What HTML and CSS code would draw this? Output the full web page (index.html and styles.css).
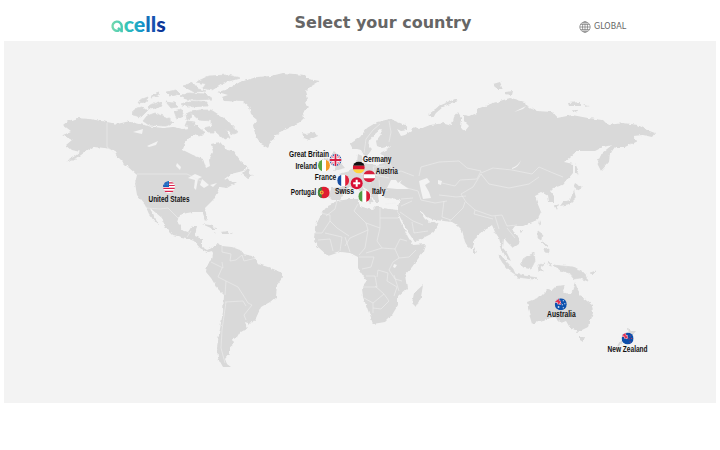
FILE: index.html
```
<!DOCTYPE html>
<html lang="en">
<head>
    <meta charset="utf-8">
    <title>Select your country</title>
    <link rel="stylesheet" href="styles.css">
</head>
<body>
    <div class="header">
        <a class="logo">
            <svg width="60" height="20" viewBox="0 0 60 20" aria-label="Qcells">
                <defs>
                    <linearGradient id="brand" gradientUnits="userSpaceOnUse" x1="0" y1="0" x2="55" y2="0">
                        <stop offset="0" stop-color="#76d9ad"/>
                        <stop offset=".28" stop-color="#36c5b9"/>
                        <stop offset=".55" stop-color="#159bc9"/>
                        <stop offset=".78" stop-color="#164fae"/>
                        <stop offset="1" stop-color="#08298c"/>
                    </linearGradient>
                </defs>
                <path class="logo-q" d="M8 13.4A4.6 4.6 0 1 1 10.7 9.3V15.2M7 10.8L10.4 14"/>
                <text class="logo-text" x="12.7" y="15" textLength="42" lengthAdjust="spacingAndGlyphs">cells</text>
            </svg>
        </a>
        <h1>Select your country</h1>
        <a class="global">
            <svg width="12" height="12" viewBox="0 0 12 12">
                <circle cx="6" cy="6" r="5.2"/>
                <ellipse cx="6" cy="6" rx="2.5" ry="5.2"/>
                <path d="M6 .8V11.2M.8 6H11.2M1.6 3.4H10.4M1.6 8.6H10.4"/>
            </svg>
            <span>GLOBAL</span>
        </a>
    </div>

    <div class="map">
        <svg width="712" height="362" viewBox="4 41 712 362">
            <defs>
                <filter id="coast" filterUnits="userSpaceOnUse" x="4" y="41" width="712" height="362">
                    <feTurbulence type="fractalNoise" baseFrequency=".22" numOctaves="2" seed="4" result="noise"/>
                    <feDisplacementMap in="SourceGraphic" in2="noise" scale="3.5" xChannelSelector="R" yChannelSelector="G"/>
                </filter>
                <clipPath id="round"><circle r="6"/></clipPath>
            </defs>

            <g class="land" filter="url(#coast)">
                <!-- North America -->
                <path d="M63 125L68 121L77 118L90 119L107 122L117 124L128 121.5L140 124L150 126.5L163 128L173 127L182 129L193 127L201 131L195 134L188 139L184 144L183 150L193 155L203 159L206 168L210 166L209 160L213 152L211 144L220 142L227 150L233 151L240 161L247 167L243 171L231 174L223 180L229 178L232 182L237 182L227 188L220 187L217 193L213 200L205 208L207 218L205 220L202 212L193 212L187 213L180 215L178 223L182 230L188 232L192 226L197 226L195 236L202 239L202 247L207 250L212 248L213 251L207 252L200 248L194 241L186 238L173 235L165 227L162 218L150 208L153 216L159 224L156 223L149 214L145 205L137 195L135 183L137 175L128 167L118 157L113 150L105 148L93 147L85 152L77 158L65 162L75 156L80 152L72 150L66 145L72 140L62 135L71 131L63 125Z"/>
                <!-- Arctic islands -->
                <path class="islands" d="M134 109L142 107L147 111L141 117L133 115ZM147 116L155 113L166 117L173 123L166 126L149 125L143 121ZM140 100L148 97L146 102L138 103ZM153 94L159 92L158 95L151 97ZM150 105L160 102L162 106L152 109L147 108ZM166 92L176 90L180 94L170 96ZM166 102L174 103L178 107L171 108ZM174 111L181 109L184 116L177 119ZM186 114L190 112L192 117L187 120ZM181 104L190 101L207 102L207 106L188 107ZM180 96L188 93L205 94L212 99L198 100L186 99ZM183 86L193 83L198 89L206 91L194 92ZM196 82L209 76L228 75L240 78L225 82L212 90L203 88L206 84ZM190 112L200 110L211 110L222 117L231 124L238 132L233 134L226 129L230 138L224 139L216 132L208 132L204 128L212 126L212 121L199 120ZM188 127L196 125L200 129L206 133L199 136L192 132ZM187 121L195 122L193 127L185 126Z"/>
                <!-- Greenland, Iceland, Caribbean -->
                <path d="M218 92L228 89L240 82L257 77L271 76L283 73L305 75L308 79L320 81L310 87L306 91L308 98L305 103L309 107L303 113L304 118L300 122L290 127L278 133L272 140L268 148L261 144L257 138L254 130L253 125L257 120L251 115L249 107L243 102L225 101L222 97L228 95ZM302 133L306 134L315 132L318 136L309 140L304 138Z"/>
                <path d="M242 174L248 168L249 173L253 176L247 178ZM202 224L210 225L218 229L213 229ZM220 232L228 231L229 234L222 234ZM213 232L216 233L214 234ZM230 232L233 233L231 234Z"/>
                <!-- South America -->
                <path d="M211 249L217 244L222 246L232 247L240 250L243 254L253 256L258 264L268 267L281 272L283 277L277 285L276 297L270 302L261 307L256 318L251 324L245 322L247 328L240 332L237 337L233 338L234 344L229 348L229 354L225 359L227 364L231 367L223 367L218 358L217 347L220 328L223 312L224 295L217 288L211 278L206 272L207 265L212 260L213 253Z"/>
                <!-- Eurasia -->
                <path d="M353 149L350 144L360 137L367 128L377 122L390 119L405 125L408 130L401 131L397 129L401 136L405 135L411 131L415 127L420 129L430 125L445 123L452 125L454 117L458 112L461 117L460 128L465 131L469 126L464 121L464 115L470 116L477 113L477 109L493 103L510 98L525 102L527 107L537 111L552 112L557 118L572 115L588 118L603 120L608 125L623 123L638 125L647 130L655 133L652 137L643 135L633 136L637 141L625 147L615 147L610 154L609 162L601 171L597 163L602 153L612 145L603 147L595 151L577 151L564 162L573 164L573 173L563 185L553 188L550 191L554 196L554 202L549 202L548 195L543 192L535 196L537 202L541 212L537 220L523 226L515 226L512 230L520 238L519 244L513 248L507 242L504 238L503 248L507 253L511 261L507 259L502 250L499 238L495 232L492 225L485 230L475 238L473 247L470 250L465 242L462 230L457 225L452 222L435 220L428 218L423 212L419 211L425 219L430 223L433 221L439 225L433 233L415 242L408 232L400 217L397 210L399 203L400 199L385 198L382 194L387 190L382 190L378 195L379 202L375 202L371 195L366 188L362 186L370 195L373 201L370 203L365 197L358 189L349 188L344 194L340 200L332 200L329 197L331 188L343 187L344 179L339 174L350 171L357 162L358 154L362 156L362 163L376 165L384 163L384 157L380 153L388 149L391 146L382 148L377 146L376 141L382 133L381 129L375 134L370 140L369 146L372 149L368 155L365 157L361 150L357 149Z"/>
                <path d="M330 159L334 151L338 155L340 162L345 168L333 171L337 165ZM320 161L328 158L330 166L321 169ZM428 115L439 106L455 99L457 101L443 107L436 113L433 118ZM493 84L500 82L503 89L496 89ZM505 92L513 91L512 95L505 94ZM568 103L580 102L580 106L569 106ZM583 105L590 106L586 107ZM572 110L578 111L574 113Z"/>
                <path d="M575 163L578 170L577 176L575 172ZM576 183L582 187L577 190L574 188ZM574 190L576 198L570 204L560 206L563 202L570 200ZM555 206L559 204L557 210ZM540 220L541 223L539 226ZM474 247L477 252L474 254ZM520 230L523 230L521 233Z"/>
                <!-- Africa -->
                <path d="M328 205L337 201L350 199L358 199L360 206L372 210L376 206L383 208L397 210L400 220L408 237L413 245L425 244L423 252L412 267L405 275L407 288L398 296L398 305L392 315L385 322L373 324L369 313L363 297L362 290L366 280L358 268L358 257L350 253L340 252L328 256L318 247L314 240L315 227L322 213ZM423 285L421 297L416 307L412 303L414 293Z"/>
                <!-- South East Asia and Oceania -->
                <path class="islands" d="M498 255L503 258L513 269L515 274L509 270L503 263ZM515 274L525 276L538 278L533 279L517 277ZM521 261L530 255L534 253L535 261L531 269L523 267ZM538 265L545 263L540 267L544 271L541 270L539 272ZM538 231L542 234L541 240L538 238ZM544 249L549 248L549 253L545 252ZM542 242L547 244L546 246ZM554 265L562 266L574 267L584 273L588 281L580 278L574 279L569 273L560 270ZM590 273L596 271L592 275ZM550 262L551 266L549 265Z"/>
                <path d="M527 302L540 297L548 289L552 290L556 286L565 285L563 291L571 294L575 282L578 290L582 297L592 305L593 313L588 327L578 332L570 328L566 321L561 323L555 317L543 320L532 324L530 317ZM580 337L585 337L583 342L580 340ZM628 327L632 331L636 331L631 337L627 340L616 348L620 341L629 336Z"/>
            </g>

            <g class="water">
                <path d="M133 132L143 129L142 134ZM147 146L158 141L156 145L149 147ZM177 163L181 167L180 170L176 166ZM188 178L195 174L202 177L198 179L196 190L194 188L195 180ZM202 179L209 185L204 188L200 185ZM210 185L217 183L213 187Z"/>
                <path d="M387 188L391 180L396 180L398 183L402 180L400 183L409 189L397 189ZM419 181L427 178L430 182L425 185L429 192L431 198L423 199L421 191ZM438 180L442 181L441 185L438 184ZM394 264L397 265L395 268L393 267ZM512 168Q519 165 521 160Q519 167 512 169ZM514 112L526 106L523 109Z"/>
            </g>

            <g class="borders">
                <path d="M107 123V147M107 147L116 154M137 174H187L201 181M147 208L160 209L168 208L178 218M187 237L191 231"/>
                <path d="M211 262L223 268L222 262M222 268L218 277L226 281L225 295M226 281L238 287L245 298L248 303L252 305L244 315L246 320M225 302L243 301L246 306M226 302L222 330L221 348L225 363M222 246L222 252L231 254L230 261L236 260L242 255L244 261L256 258"/>
                <path d="M320 213L330 215V221L337 228L349 236M330 221L322 233H315M337 201L335 209L326 216M358 204L354 211L366 223L368 230L350 238L345 246M366 223L380 228V208M380 218H398M380 228L377 241L382 248L366 253M368 230L365 248L359 255M382 248L395 249L400 239L407 241M395 249L399 258L409 257L416 250M399 258L393 262L389 270L395 279L402 281M359 257L374 257L371 267L362 269M366 276H375L377 287L364 287M377 277L378 270L388 273L387 281L397 287L394 296M375 286L384 294L373 303V313M373 303L364 298M384 294L389 301L381 309L373 308M394 275L399 291M318 240L330 239L333 251M325 233L342 237L340 251M345 237L350 252M400 212L413 221L423 225M401 206L412 201M412 222L414 233L428 231"/>
                <path d="M364 153L366 139L373 130L380 124M389 121L391 132L389 142M384 158L390 163L394 174M385 166L373 167L375 175L389 178M361 174L371 176L370 184M379 180L380 190M389 174L401 171L414 176M407 188L418 191L421 200L435 203L447 201M419 176L421 167L439 162L459 161L467 168L481 171L477 179L460 180L455 186L442 183M481 173L493 168L512 170L532 174L539 167L553 173L563 177M481 174L489 184L509 188L529 184L539 177M481 174L473 187L461 194L466 202L475 210L492 216L502 215L507 226L517 225M439 195L448 196L456 197L466 196M444 201L442 217L451 220L463 208L465 202M475 210L474 214L493 219M495 216L499 229M507 228L515 238M385 204L396 203M401 199L413 198"/>
            </g>

            <g class="pin" transform="translate(169 187)">
                <g clip-path="url(#round)">
                    <path fill="#fff" d="M-6-6H6V6H-6Z"/>
                    <path stroke="#d8234c" stroke-width="1.2" d="M-6-4.2H6M-6-1.5H6M-6 1.4H6M-6 4.3H6"/>
                    <path fill="#1463bd" d="M-6-6H0V0H-6Z"/>
                    <path stroke="#a9c9ea" stroke-width=".6" stroke-dasharray=".7 1" d="M-5-4H0M-5-2.2H0"/>
                </g>
                <text x="-20.5" y="15.2" textLength="41" lengthAdjust="spacingAndGlyphs">United States</text>
            </g>
            <g class="pin" transform="translate(335.5 160)">
                <g clip-path="url(#round)">
                    <path fill="#17479d" d="M-6-6H6V6H-6Z"/>
                    <path stroke="#fff" stroke-width="2.4" d="M-6-6L6 6M6-6L-6 6"/>
                    <path stroke="#dc2948" stroke-width=".9" d="M-6-6L6 6M6-6L-6 6"/>
                    <path stroke="#fff" stroke-width="3.4" d="M0-6V6M-6 0H6"/>
                    <path stroke="#d61f43" stroke-width="1.8" d="M0-6V6M-6 0H6"/>
                </g>
                <text x="-46.5" y="-3.5" textLength="40" lengthAdjust="spacingAndGlyphs">Great Britain</text>
            </g>
            <g class="pin" transform="translate(324 165.5)">
                <g clip-path="url(#round)">
                    <path fill="#fff" d="M-6-6H6V6H-6Z"/>
                    <path fill="#5aa544" d="M-6-6H-2V6H-6Z"/>
                    <path fill="#f59a28" d="M2-6H6V6H2Z"/>
                </g>
                <text x="-28.5" y="3" textLength="21.5" lengthAdjust="spacingAndGlyphs">Ireland</text>
            </g>
            <g class="pin" transform="translate(358.8 167.5)">
                <g clip-path="url(#round)">
                    <path fill="#111" d="M-6-6H6V-1.8H-6Z"/>
                    <path fill="#d7142e" d="M-6-1.8H6V2H-6Z"/>
                    <path fill="#ffd33e" d="M-6 2H6V6H-6Z"/>
                </g>
                <text x="4.2" y="-5.7" textLength="28.5" lengthAdjust="spacingAndGlyphs">Germany</text>
            </g>
            <g class="pin" transform="translate(369.3 176.2)">
                <g clip-path="url(#round)">
                    <path fill="#d8203e" d="M-6-6H6V6H-6Z"/>
                    <path fill="#fff" d="M-6-2H6V2H-6Z"/>
                </g>
                <text x="6.5" y="-2.5" textLength="22" lengthAdjust="spacingAndGlyphs">Austria</text>
            </g>
            <g class="pin" transform="translate(343.2 180.5)">
                <g clip-path="url(#round)">
                    <path fill="#fff" d="M-6-6H6V6H-6Z"/>
                    <path fill="#174ea3" d="M-6-6H-2V6H-6Z"/>
                    <path fill="#df203b" d="M2-6H6V6H2Z"/>
                </g>
                <text x="-28.5" y="-.3" textLength="21.5" lengthAdjust="spacingAndGlyphs">France</text>
            </g>
            <g class="pin" transform="translate(356.7 183.2)">
                <circle r="6" fill="#d90f35"/>
                <path stroke="#fff" stroke-width="2" d="M0-3.5V3.5M-3.5 0H3.5"/>
                <text x="-21.7" y="10.4" textLength="19" lengthAdjust="spacingAndGlyphs">Swiss</text>
            </g>
            <g class="pin" transform="translate(364.3 196.2)">
                <g clip-path="url(#round)">
                    <path fill="#fff" d="M-6-6H6V6H-6Z"/>
                    <path fill="#529d45" d="M-6-6H-2V6H-6Z"/>
                    <path fill="#d91c37" d="M2-6H6V6H2Z"/>
                </g>
                <text x="7.7" y="-2.5" textLength="13.5" lengthAdjust="spacingAndGlyphs">Italy</text>
            </g>
            <g class="pin" transform="translate(323.7 192.5)">
                <g clip-path="url(#round)">
                    <path fill="#df1d31" d="M-6-6H6V6H-6Z"/>
                    <path fill="#3d8740" d="M-6-6H-2V6H-6Z"/>
                </g>
                <circle cx="-2" r="1.9" fill="#f4c837"/>
                <circle cx="-2" r=".9" fill="#d92c38"/>
                <text x="-33" y="2.7" textLength="25.5" lengthAdjust="spacingAndGlyphs">Portugal</text>
            </g>
            <g class="pin" transform="translate(560.8 304.2)">
                <g clip-path="url(#round)">
                    <path fill="#0d50ad" d="M-6-6H6V6H-6Z"/>
                    <path stroke="#fff" stroke-width="2" d="M-2.5-6V0M-6-2.5H0M-6-6L0 0"/>
                    <path stroke="#df3152" stroke-width="1.2" d="M-2.5-6V0M-6-2.5H0M-6-6L0 0"/>
                </g>
                <path class="stars" d="M-3 2H-1.5V3.5H-3ZM2-4H3V-3H2ZM3.5-1H4.5V0H3.5ZM1 0H2V1H1ZM2 3H3V4H2Z"/>
                <text x="-13.7" y="13" textLength="28.5" lengthAdjust="spacingAndGlyphs">Australia</text>
            </g>
            <g class="pin" transform="translate(627.6 338.5)">
                <g clip-path="url(#round)">
                    <path fill="#0d4eaa" d="M-6-6H6V6H-6Z"/>
                    <path stroke="#fff" stroke-width="2" d="M-2.5-6V0M-6-2.5H0M-6-6L0 0"/>
                    <path stroke="#df3152" stroke-width="1.2" d="M-2.5-6V0M-6-2.5H0M-6-6L0 0"/>
                </g>
                <path fill="#cf315c" d="M2-3H3V-2H2ZM3.5-.5H4.5V.5H3.5ZM1 0H2V1H1ZM2 3H3V4H2Z"/>
                <text x="-20" y="13.7" textLength="40" lengthAdjust="spacingAndGlyphs">New Zealand</text>
            </g>
        </svg>
    </div>
</body>
</html>
```

FILE: styles.css
```
*{
    padding: 0;
    margin: 0;
    box-sizing: border-box;
}
body{
    background-color: #fff;
    font-family: "DejaVu Sans", sans-serif;
    color: #666;
    padding: 0 4px;
}

.header{
    display: grid;
    grid-template-columns: 180px 1fr 180px;
    height: 41px;
}
.logo{
    padding: 17px 0 0 107px;
}
.logo svg{
    display: block;
    overflow: visible;
}
.logo-q{
    fill: none;
    stroke: url(#brand);
    stroke-width: 2.4;
}
.logo-text{
    font-family: Lato, sans-serif;
    font-size: 20px;
    font-weight: 900;
    fill: url(#brand);
}
.header h1{
    font-size: 16px;
    line-height: 20px;
    padding: 13px 0 0 110.5px;
    white-space: nowrap;
}
.global{
    display: flex;
    gap: 3px;
    padding: 21px 0 0 43px;
    font-size: 8px;
    line-height: 12px;
}
.global svg{
    fill: none;
    stroke: #777;
    stroke-width: .7;
}

.map{
    height: 362px;
    background-color: #f3f3f3;
}
.map svg{
    display: block;
}
.land{
    fill: #d9d9d9;
}
.islands{
    stroke: #d9d9d9;
    stroke-width: .8;
}
.water{
    fill: #f3f3f3;
}
.borders{
    fill: none;
    stroke: #efefef;
    stroke-width: .6;
    stroke-linejoin: round;
}
.stars{
    fill: #fff;
}
.pin text{
    font-family: "Liberation Sans Narrow", "Liberation Sans", sans-serif;
    font-size: 9px;
    font-weight: bold;
    fill: #111;
}
```
